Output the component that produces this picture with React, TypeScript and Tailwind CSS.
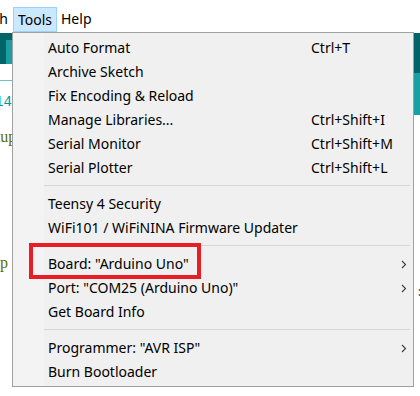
import type { ReactNode } from 'react'

type Item =
  | { kind: 'sep' }
  | { kind: 'item'; label: string; shortcut?: string; sub?: boolean }

const items: Item[] = [
  { kind: 'item', label: 'Auto Format', shortcut: 'Ctrl+T' },
  { kind: 'item', label: 'Archive Sketch' },
  { kind: 'item', label: 'Fix Encoding & Reload' },
  { kind: 'item', label: 'Manage Libraries...', shortcut: 'Ctrl+Shift+I' },
  { kind: 'item', label: 'Serial Monitor', shortcut: 'Ctrl+Shift+M' },
  { kind: 'item', label: 'Serial Plotter', shortcut: 'Ctrl+Shift+L' },
  { kind: 'sep' },
  { kind: 'item', label: 'Teensy 4 Security' },
  { kind: 'item', label: 'WiFi101 / WiFiNINA Firmware Updater' },
  { kind: 'sep' },
  { kind: 'item', label: 'Board: "Arduino Uno"', sub: true },
  { kind: 'item', label: 'Port: "COM25 (Arduino Uno)"', sub: true },
  { kind: 'item', label: 'Get Board Info' },
  { kind: 'sep' },
  { kind: 'item', label: 'Programmer: "AVR ISP"', sub: true },
  { kind: 'item', label: 'Burn Bootloader' },
]

function Chevron() {
  return (
    <svg width="6" height="9" viewBox="0 0 6 9" className="block">
      <polyline
        points="1,1 4.5,4.5 1,8"
        fill="none"
        stroke="#3c3c3c"
        strokeWidth="1.1"
      />
    </svg>
  )
}

function MenuRow({ label, shortcut, sub }: { label: string; shortcut?: string; sub?: boolean }) {
  return (
    <div className="flex h-[24px] items-center pl-[35px] pr-[6px] leading-[24px] whitespace-nowrap">
      <span className="w-[263px] shrink-0">{label}</span>
      <span className="flex-1">{shortcut}</span>
      {sub && <Chevron />}
    </div>
  )
}

function CodeLine({ children, className }: { children?: ReactNode; className?: string }) {
  return (
    <div className="h-[18px] overflow-hidden leading-[18px] whitespace-nowrap">
      <span className={className}>{children}</span>
    </div>
  )
}

export default function App() {
  return (
    <div className="relative h-[396px] w-[420px] overflow-hidden bg-white font-['Noto_Sans',sans-serif] text-[14px] text-black">
      {/* menu bar */}
      <div className="flex h-[32px] items-end">
        <div className="flex h-[25px] w-[13px] justify-end overflow-hidden pr-[5px] leading-[23px] whitespace-nowrap">
          Sketch
        </div>
        <div className="flex h-[25px] w-[44px] justify-center border border-[#99d1ff] bg-[#cce8ff] leading-[23px]">
          Tools
        </div>
        <div className="h-[25px] pl-[4px] leading-[23px]">Help</div>
      </div>

      <div className="flex">
        {/* editor behind, left side */}
        <div className="w-[12px] shrink-0 overflow-hidden">
          <div className="h-[1px]" />
          <div className="h-[31px] bg-[#006468] pl-[6px] pt-[7px]">
            <div className="h-[24px] w-[6px] bg-[#1c9fa3]" />
          </div>
          <div className="h-[16px]" />
          <div className="h-[1px] bg-[#6cc3c5]" />
          <div className="h-[11px]" />
          <CodeLine className="ml-[-5px] font-['Liberation_Mono',monospace] text-[14px] text-[#00979c]">14</CodeLine>
          <CodeLine />
          <CodeLine className="ml-[-50px] font-['Liberation_Serif',serif] text-[16px] text-[#5e6d03]">void setup() {'{'}</CodeLine>
          <CodeLine />
          <CodeLine />
          <CodeLine />
          <CodeLine />
          <CodeLine />
          <CodeLine />
          <CodeLine className="ml-[-53px] font-['Liberation_Serif',serif] text-[16px] text-[#5e6d03]">void loop () {'{'}</CodeLine>
        </div>

        {/* Tools menu */}
        <div className="w-[402px] shrink-0 self-start border border-[#a0a0a0] bg-[linear-gradient(to_right,#f3f3f3_31px,#f0f0f0_31px)] pt-[3px] pb-[2px]">
          {items.map((it, i) =>
            it.kind === 'sep' ? (
              <div key={i} className="h-[12px] pt-[5px] pl-[31px] pr-[3px]">
                <div className="h-[1px] bg-[#d7d7d7]" />
              </div>
            ) : (
              <MenuRow key={i} label={it.label} shortcut={it.shortcut} sub={it.sub} />
            ),
          )}
        </div>

        {/* editor behind, right side */}
        <div className="w-[6px] shrink-0">
          <div className="h-[1px]" />
          <div className="h-[40px] bg-[#006468]" />
          <div className="h-[42px] bg-[#17a1a5]" />
          <div className="h-[172px]" />
          <div className="pl-[2px] font-['Liberation_Mono',monospace] text-[12px] leading-[12px] text-[#555]">:</div>
        </div>
      </div>

      {/* red highlight around Board entry */}
      <div className="absolute left-[29px] top-[243px] h-[36px] w-[172px] border-4 border-[#e81e25]" />
    </div>
  )
}
